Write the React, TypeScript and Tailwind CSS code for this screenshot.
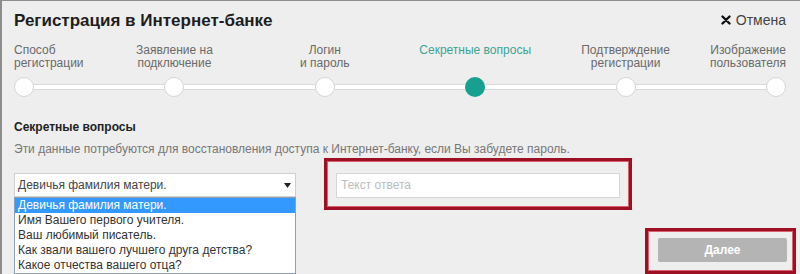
import React from "react";

const steps = [
  { label: ["Способ", "регистрации"], align: "items-start text-left" },
  { label: ["Заявление на", "подключение"], align: "items-center text-center" },
  { label: ["Логин", "и пароль"], align: "items-center text-center" },
  { label: ["Секретные вопросы"], align: "items-center text-center", active: true },
  { label: ["Подтверждение", "регистрации"], align: "items-center text-center" },
  { label: ["Изображение", "пользователя"], align: "items-end text-right" },
];

const questions = [
  "Девичья фамилия матери.",
  "Имя Вашего первого учителя.",
  "Ваш любимый писатель.",
  "Как звали вашего лучшего друга детства?",
  "Какое отчества вашего отца?",
];

function CloseIcon() {
  return (
    <svg width="10" height="10" viewBox="0 0 10 10" className="shrink-0">
      <path d="M1.5 1.5 L8.5 8.5 M8.5 1.5 L1.5 8.5" stroke="#111" strokeWidth="2.4" strokeLinecap="round" />
    </svg>
  );
}

function Stepper() {
  return (
    <div className="mt-[13px]">
      <div className="flex h-[26px] justify-between">
        {steps.map((step, i) => (
          <div key={i} className={`flex w-[20px] flex-col ${step.align}`}>
            <p
              className={`whitespace-nowrap text-[12px] leading-[13px] ${
                step.active ? "text-[#3ba596]" : "text-[#6a6a6a]"
              }`}
            >
              {step.label.map((line, j) => (
                <span key={j} className="block">
                  {line}
                </span>
              ))}
            </p>
          </div>
        ))}
      </div>
      <div className="mt-[7px] flex items-center">
        {steps.map((step, i) => (
          <React.Fragment key={i}>
            {i > 0 && <div className="h-[6px] flex-1 border-y border-[#d9d9d9] bg-white" />}
            <div
              className={`h-[20px] w-[20px] shrink-0 rounded-full ${
                step.active ? "bg-[#15a090]" : "border border-[#d5d5d5] bg-white"
              }`}
            />
          </React.Fragment>
        ))}
      </div>
    </div>
  );
}

function QuestionSelect() {
  return (
    <div className="relative mt-[15px] w-[282px]">
      <div className="flex h-[24px] items-center justify-between border border-[#cfcfcf] bg-white pl-[3px] pr-[4px] text-[12px] text-[#444]">
        <span>{questions[0]}</span>
        <svg width="7" height="5" viewBox="0 0 7 5">
          <path d="M0 0 H7 L3.5 5 Z" fill="#222" />
        </svg>
      </div>
      <ul className="absolute left-0 top-[24px] w-[282px] border border-[#8da0b8] bg-white text-[12px] text-[#333]">
        {questions.map((q, i) => (
          <li
            key={i}
            className={`h-[15px] pl-[3px] leading-[15px] ${i === 0 ? "bg-[#3399ff] text-white" : ""}`}
          >
            {q}
          </li>
        ))}
      </ul>
    </div>
  );
}

export default function App() {
  return (
    <div
      className="h-[274px] w-[800px] overflow-hidden border-l-2 border-t border-[#8c8c8c] bg-[#eeeeee] pl-[12px] pr-[14px]"
      style={{ fontFamily: '"Liberation Sans", Arial, sans-serif' }}
    >
      <div className="flex items-start justify-between pt-[10px]">
        <h1 className="text-[17px] font-bold leading-[20px] text-[#1e1e1e]">Регистрация в Интернет-банке</h1>
        <button className="mt-[1px] flex items-center gap-[5px] text-[14px] leading-[16px] text-[#444]">
          <CloseIcon />
          Отмена
        </button>
      </div>

      <Stepper />

      <h2 className="mt-[22px] text-[12px] font-bold leading-[16px] text-[#222]">Секретные вопросы</h2>
      <p className="mt-[6px] text-[12px] leading-[16px] text-[#777]">
        Эти данные потребуются для восстановления доступа к Интернет-банку, если Вы забудете пароль.
      </p>

      <div className="mt-[1px] flex items-start">
        <QuestionSelect />
        <div className="ml-[28px] border-[3px] border-[#9d1023] px-[9px] pb-[9px] pt-[11px] shadow-[inset_0_0_0_1px_#d86070]">
          <input
            className="h-[25px] w-[284px] border border-[#d6d6d6] bg-white px-[4px] text-[12px] text-[#333] outline-none placeholder:text-[#bcbcbc]"
            placeholder="Текст ответа"
          />
        </div>
      </div>

      <div className="mt-[18px] -mr-[10px] flex justify-end">
        <div className="border-[3px] border-[#9d1023] pb-[9px] pl-[10px] pr-[6px] pt-[6px] shadow-[inset_0_0_0_1px_#d86070]">
          <button className="h-[24px] w-[129px] rounded-[2px] bg-[#b4b4b4] text-[12px] font-bold text-white">
            Далее
          </button>
        </div>
      </div>
    </div>
  );
}
